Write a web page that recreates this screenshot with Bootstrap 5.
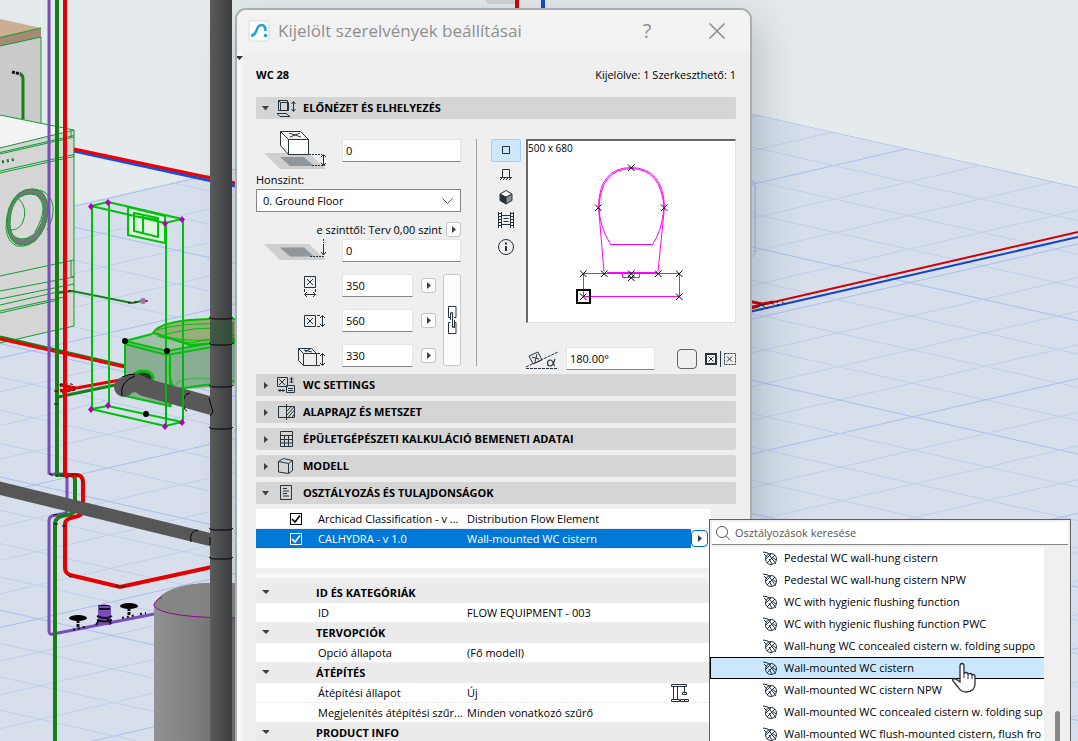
<!DOCTYPE html>
<html lang="hu">
<head>
<meta charset="utf-8">
<meta name="viewport" content="width=device-width, initial-scale=1">
<title>Kijelölt szerelvények beállításai</title>
<link href="https://cdn.jsdelivr.net/npm/bootstrap@5.3.0/dist/css/bootstrap.min.css" rel="stylesheet">
<style>
:root { --ink: #26333c; --panel: #efefef; --bar: #d5d5d5; --pick: #0078d7; }
body { font-family: "Open Sans", "Noto Sans", sans-serif; font-size: 11px; line-height: 16px; color: #000; background: #e5eaec; }
.desktop { position: relative; height: 100vh; overflow: hidden; }
.scene { position: absolute; inset: 0; width: 100%; height: 100%; }
.ico { display: block; flex: none; fill: none; stroke: var(--ink); }
/* settings window */
.dlg { position: absolute; left: 235px; top: 8px; width: 517px; bottom: -40px; border: 2px solid #a9afb1; border-radius: 11px; background: var(--panel); box-shadow: 6px 14px 44px rgba(40,60,80,.25); overflow: hidden; }
.dlg-title { height: 42px; background: #f2f2f2; padding: 0 11px 0 11px; color: #8f8f8f; }
.dlg-title h1 { font-size: 17px; line-height: 24px; font-weight: 400; }
.plain-btn { border: 0; background: none; padding: 0; color: inherit; }
.help { font-size: 20px; width: 32px; line-height: 24px; }
.shut { width: 44px; margin-left: 32px; justify-items: center; }
.dlg-body { position: relative; border-left: 5px solid #f7f7f7; padding: 0 14px; }
.dock-mark { position: absolute; left: -6px; top: 2px; width: 7px; height: 7px; fill: #333; }
.headline { height: 45px; }
.sect { display: flex; align-items: center; width: 100%; height: 22px; margin-bottom: 5px; padding: 0; border: 0; border-radius: 2px; background: var(--bar); font-size: 11px; font-weight: 700; text-align: left; color: #000; }
.sect .tri { margin-left: 5px; }
.sect .ico { margin: 0 7px; }
.tri { width: 9px; height: 9px; flex: none; fill: #404040; display: block; }
.placing { margin-top: -5px; height: 255px; padding-top: 12px; }
.left-part { width: 205px; }
.fld { height: 23px; border: 1px solid #e5e5e5; border-bottom: 1px solid #868686; background: #fff; padding: 0 3px; font-size: 11px; min-width: 0; color: #000; border-radius: 0; }
.fld-wide { width: 119px; }
.fld-dim { width: 71px; }
.fld-angle { width: 89px; }
.floor-pick { height: 23px; width: 100%; border: 1px solid #868686; background: #fff; appearance: none; padding: 0 6px; font-size: 11px; color: #000; border-radius: 0; }
.pop-btn { width: 15px; height: 15px; border: 1px solid #c4c4c4; border-radius: 3px; background: #fdfdfd; padding: 0; display: grid; place-items: center; flex: none; }
.chain { width: 18px; height: 92px; border: 1px solid #c8c8c8; border-radius: 3px; background: #fdfdfd; padding: 0; display: grid; place-items: center; }
.rule-v { width: 1px; height: 227px; background: #a0a0a0; margin: 8px 14px 0 15px; }
.view-btn { width: 30px; height: 23px; padding: 0; border: 1px solid transparent; background: none; border-radius: 2px; display: grid; place-items: center; }
.view-btn.on { background: #cce8ff; border-color: #99d1ff; }
.preview { width: 210px; height: 184px; border: 1px solid #e2e2e2; border-top: 2px solid #696969; border-left: 2px solid #696969; background: #fff; position: relative; }
.preview span { position: absolute; left: 0; top: -1px; font-size: 10px; }
.mirror { appearance: none; width: 20px; height: 20px; border: 1px solid #606060; border-radius: 4px; margin: 0 8px 0 22px; }
/* property tables */
.props { width: 455px; table-layout: fixed; border-collapse: separate; border-spacing: 0; margin: 0; }
.props td, .props th { height: 20px; padding: 0; line-height: 19px; border-bottom: 1px solid #efefef; background: #fff; white-space: nowrap; overflow: hidden; font-weight: 400; }
.props th { background: #ebebeb; font-weight: 700; border-color: #ebebeb; }
.props td:nth-child(2) { padding-left: 2px; }
.props tr.picked td { background: var(--pick); color: #fff; }
.props tr.picked td.edge { background: #fff; overflow: visible; }
.tick { appearance: none; width: 12px; height: 12px; border: 1px solid #000; background: #fff; display: block; margin: 0 auto; }
.tick:checked { background: #fff url("data:image/svg+xml,%3Csvg xmlns='http://www.w3.org/2000/svg' viewBox='0 0 10 10'%3E%3Cpath d='M1 5l3 3 5-6.500' fill='none' stroke='%23000' stroke-width='1.600'/%3E%3C/svg%3E"); }
.picked .tick:checked { border-color: #fff; background: var(--pick) url("data:image/svg+xml,%3Csvg xmlns='http://www.w3.org/2000/svg' viewBox='0 0 10 10'%3E%3Cpath d='M1 5l3 3 5-6.500' fill='none' stroke='%23fff' stroke-width='1.600'/%3E%3C/svg%3E"); }
.gap-strip { width: 455px; height: 5px; margin: 4px 0 5px; background: #f6f6f6; }
.picked .pop-btn { width: 17px; height: 17px; border-color: #0067c0; border-radius: 4px; }
/* classification menu */
.finder { position: absolute; left: 709px; top: 519px; width: 362px; bottom: -20px; border: 1px solid #606060; background: #f0f0f0; padding: 2px; }
.finder-search { height: 23px; background: #fff; border-bottom: 1px solid #868686; padding-left: 4px; }
.finder-search input { border: 0; padding: 0 0 0 4px; background: none; font-size: 11px; flex: 1; outline: 0; }
.finder-search input::placeholder { color: #555; opacity: 1; }
.finder-list { margin: 2px 24px 0 -2px; padding: 0; background: #fff; overflow: hidden; height: 240px; list-style: none; }
.finder-list a { display: flex; align-items: center; gap: 7px; height: 22px; padding-left: 52px; color: #000; text-decoration: none; white-space: nowrap; border: 1px solid transparent; border-right: 0; }
.finder-list a.on { background: #cce8ff; border-color: #000; }
.thumb { position: absolute; right: 10px; top: 191px; width: 5px; bottom: 0; border-radius: 3px; background: #868686; }
.hand { position: absolute; left: 951px; top: 662px; }
</style>
</head>
<body>
<main class="desktop">
<svg class="scene" viewBox="0 0 1078 741" preserveAspectRatio="xMinYMin slice" aria-hidden="true">
  <defs>
    <linearGradient id="stack"><stop offset="0" stop-color="#5c5c5c"/><stop offset=".4" stop-color="#505050"/><stop offset="1" stop-color="#3e3e3e"/></linearGradient>
    <linearGradient id="tank"><stop offset="0" stop-color="#929292"/><stop offset="1" stop-color="#686868"/></linearGradient>
    <clipPath id="ground"><path d="M0 222L611 82L1078 187V741H0z"/></clipPath>
  </defs>
  <path d="M0 222L611 82L1078 187V741H0z" fill="#d6dfeb"/>
  <g id="mesh" clip-path="url(#ground)" fill="none"></g>
  <path d="M486 0h29v2q0 2-4 2h-21q-4 0-4-4z" fill="#d0d4d6"/>
  <path d="M517 0V9" stroke="#d80000" stroke-width="4"/><path d="M543 0V9" stroke="#1347cf" stroke-width="4"/>
  <!-- right hand pipes -->
  <path d="M740 180q15-1 15 6v67l-4 5" fill="none" stroke="#9bb2e6"/>
  <path d="M740 309L765 304L1078 232" fill="none" stroke="#d40000" stroke-width="2"/>
  <path d="M740 314L780 305L1078 237" fill="none" stroke="#1145c8" stroke-width="2"/>
  <path d="M748 301l14 3 12-2M748 309l10-3" fill="none" stroke="#d40000" stroke-width="3"/>
  <path d="M758 303l10 6m-10-2l8-3m4-3l4 4m3-4l1 5m4-4l3 2" stroke="#111" stroke-dasharray="2 1"/>
  <!-- cabinet -->
  <path d="M0 46L41 36V123L0 115z" fill="#cbcbcb"/>
  <path d="M0 19L41 28L0 37.500z" fill="#ccae92"/><path d="M0 37.500L41 28V37L0 46z" fill="#a58a74"/>
  <path d="M0 37.500L41 28M0 46L41 37V123" fill="none" stroke="#109c30"/>
  <path d="M12 72l9 2" stroke="#111" stroke-width="3" stroke-dasharray="3 1"/><path d="M20 74q3 1 3 5v40" fill="none" stroke="#168016" stroke-width="3"/>
  <!-- washing machine -->
  <path d="M0 115L74 130V326L0 343z" fill="#d5d5d5"/>
  <path d="M0 115L74 130L0 148z" fill="#f3f3f3"/>
  <g fill="none" stroke="#109c30">
    <path d="M0 115L74 130V326L0 343M74 130L0 148M0 152.500L74 135.500M0 154L74 137M0 171L74 154.500M0 173L74 156.500M71 131v6M74 260L0 276M71 260v16l3 1M0 291L74 277M0 299L74 284M0 305L62 291M0 311L64 297M0 313L58 300"/>
    <path d="M33 189q12 0 14 15q2 20-8 32q-9 12-22 10q-10-4-11-18q0-23 12-34q7-5 15-5zM40 190q11 4 13 16q1 13-6 24"/>
    <path d="M2 162l14-3" stroke="#1d7a2c" stroke-width="3" stroke-dasharray="2 3"/>
  </g>
  <path d="M32 189Q47 190 48 208Q48 228 35 241Q27 246 20 245Q9 243 7 226Q7 205 18 194Q24 189 32 189z" fill="#777" stroke="#109c30"/>
  <path d="M30 194Q43 194 44 208Q44 225 33 235Q26 240 20 239Q10 237 10 224Q10 205 20 197Q25 194 30 194z" fill="#d9d9d9" stroke="#109c30"/>
  <path d="M19 199q10 10 3 25q-4 6-11 6M36 195q7 5 7 14t-8 23" fill="none" stroke="#109c30"/>
  <!-- supply pipes -->
  <path d="M74 151L235 186" stroke="#164fe0" stroke-width="3"/><path d="M74 149L235 183" stroke="#f00000" stroke-width="3"/>
  <path d="M0 337L125 366" stroke="#168016" stroke-width="3"/><path d="M0 339L125 367" stroke="#f00000" stroke-width="3"/>
  <path d="M58 293l14-2 60 12 10-2" fill="none" stroke="#168016" stroke-width="2"/><path d="M62 292l12-2M128 303l16-2" stroke="#111" stroke-dasharray="3 3"/>
  <circle cx="143" cy="301" r="3" fill="#987a9b"/><path d="M145 301h3" stroke="#c815cc" stroke-width="2"/>
  <path d="M58 397L120 384" stroke="#168016" stroke-width="3"/><path d="M60 391L120 380M60 385l16 3-14 4" stroke="#e50000" stroke-width="3" fill="none"/>
  <path d="M60 384h12l4 6-14 3z" fill="none" stroke="#111" stroke-dasharray="3 2"/>
  <path d="M49 0V473l4 2M53 474h14V510q0 4-6 4l-9 2q-3 1-3 5V631q0 4 4 3l101-20" fill="none" stroke="#7a4cc0" stroke-width="3"/>
  <path d="M57 0V475M56 475h14q5 0 5 5V508q0 6-8 7q-11 1-12 8V741" fill="none" stroke="#168016" stroke-width="4"/>
  <path d="M65 0V475h11q7 0 7 7V510q0 6-9 7q-9 2-9 7V568q0 5 5 7L120 587L212 567" fill="none" stroke="#e40000" stroke-width="4"/>
  <path d="M49 474l6 2 5-2 6 4 7-4 7 2 3 5M53 515l6-1M54 524h6M62 526h6M68 575l4 3M115 586l12 1M54 404h6M54 391h6" fill="none" stroke="#111" stroke-dasharray="4 2"/>
  <!-- water meter and valves -->
  <path d="M98 606h13v19h-13z" fill="#7a4cc0"/><path d="M99 609h11M97 616q8 4 15 0M97 620q8 3 15 0M96 625l3-5M107 618l4 6" fill="none" stroke="#111" stroke-width="2"/>
  <path d="M98 606q6-2 12 0" stroke="#111"/><ellipse cx="78" cy="618" rx="9" ry="3"/><ellipse cx="129" cy="606" rx="9" ry="3"/>
  <path d="M78 620v8M129 608v8" stroke="#111" stroke-width="3" stroke-dasharray="3 1"/><path d="M73 630l12-3M122 618l14-3M140 614l6-1" stroke="#111" stroke-width="2" stroke-dasharray="2 3"/>
  <!-- boiler -->
  <path d="M154 604Q165 584 210 583H240V741H154z" fill="url(#tank)"/>
  <path d="M154 604Q165 584 210 583H240V618Q160 619 154 604z" fill="#858585"/>
  <path d="M162 597Q153 602 154 606Q163 618 240 618" fill="none" stroke="#8c0a8c"/>
  <!-- WC and cistern -->
  <path d="M128 207L165 214V243L128 235z" fill="#dff5df"/>
  <path d="M125 341L160 331L240 322V386L172 390V407L125 396z" fill="#9dc0a6"/>
  <path d="M125 341L167 351L240 340V384L172 390V407L125 396z" fill="#7fa58a" fill-opacity=".65"/>
  <path d="M153 333Q160 320 210 319H240V341L190 345z" fill="#9aae7c" stroke="#00c000" stroke-width="2"/>
  <g fill="none" stroke="#00c00a" stroke-width="2">
    <path d="M91 206L108 202L182 219L165 223zM92 206V409M109 203V406M166 223V426M183 219V422M91 409L108 406L182 422L165 426zM128 207v28l37 8V216zM134 213l24 5v19l-24-6zM134 216l24 4M143 214v20"/>
    <path d="M125 341L152 334M125 341L167 351L240 338M125 344L167 355L240 342M125 341V396l45 10V354M170 360q-2 25 6 29l58-8"/>
    <path d="M157 330q25-8 75-6M157 337q35-12 75-8M157 333q25 12 75 4M160 337l30 6 45-8" stroke-width="1"/>
    <path d="M175 386q5-10 35-7q10 3 2 6" stroke="#4ebd52"/>
  </g>
  <ellipse cx="143" cy="378" rx="10" ry="7" fill="#263826" stroke="#00c00a" stroke-width="3"/>
  <path d="M127 387Q134 379 144 387L212 406" fill="none" stroke="#585858" stroke-width="18" stroke-linejoin="round"/><circle cx="124" cy="387" r="10" fill="#585858"/>
  <path d="M122 377q7-3 13-3M122 396q-3-14 13-20M190 393q-7 1-7 12 2 6 4 6" fill="none" stroke="#000"/>
  <path d="M166 352V426M183 345V422" stroke="#00b50a" stroke-width="2"/>
  <path d="M-5 487L212 540" stroke="#575757" stroke-width="13"/><path d="M198 530q-9 1-7 12" fill="none" stroke="#000"/>
  <path d="M210 0H232V741H210z" fill="url(#stack)"/>
  <path d="M210 322q11-5 24 0v22l-24 2z" fill="#315b38" fill-opacity=".55"/>
  <path d="M209 317q2 2 5 2h14q4 0 5-2M209 343q2 2 5 2h14q4 0 5-2M209 385q2 2 5 2h14q4 0 5-2M209 427q2 2 5 2h14q4 0 5-2M209 528q2 2 5 2h14q4 0 5-2M209 557q2 2 5 2h14q4 0 5-2M209 398l4 14-3 4M210 537v8" fill="none" stroke="#000"/>
  <g fill="#b300b8"><path id="dm" d="M91 203l3 3.500-3 3.500-3-3.500z"/><use href="#dm" x="17" y="-4"/><use href="#dm" x="91" y="13"/><use href="#dm" x="74" y="17"/><use href="#dm" y="203"/><use href="#dm" x="17" y="199"/><use href="#dm" x="91" y="216"/><use href="#dm" x="74" y="220"/></g>
  <g><circle cx="125" cy="341" r="3"/><circle cx="167" cy="351" r="3"/><circle cx="146" cy="414" r="3"/></g>
</svg>

<section class="dlg" aria-label="Kijelölt szerelvények beállításai">
  <header class="dlg-title d-flex align-items-center">
    <svg class="ico me-2" width="22" height="22" viewBox="0 0 22 22"><rect x="1" y="1" width="20" height="20" rx="3" fill="#fff" stroke="#dcdcdc"/><path d="M3 16Q7 15 8.500 10.500Q10 5 13.500 5Q17.500 5 17.500 11" stroke="#1ba6d2" stroke-width="2.500"/><circle cx="17.500" cy="15.500" r="1.800" fill="#1ba6d2" stroke="none"/></svg>
    <h1 class="m-0 flex-grow-1">Kijelölt szerelvények beállításai</h1>
    <button class="plain-btn help" aria-label="Súgó">?</button>
    <button class="plain-btn shut d-grid" aria-label="Bezárás"><svg class="ico" width="16" height="16" viewBox="0 0 16 16"><path d="M.5.5l15 15M15.500.5l-15 15" stroke="#8b8b8b" stroke-width="1.500"/></svg></button>
  </header>
  <div class="dlg-body">
    <svg class="dock-mark" viewBox="0 0 7 7"><path d="M0 2h7L3.500 6z"/></svg>
    <div class="headline d-flex justify-content-between align-items-center"><strong>WC 28</strong><span>Kijelölve: 1 Szerkeszthető: 1</span></div>

    <button class="sect"><svg class="tri" viewBox="0 0 9 9"><path d="M1 2h7L4.500 6.500z"/></svg><svg class="ico" width="19" height="18" viewBox="0 0 19 18"><path d="M1.500 1.500h9v10h-9zM1.500 1.500l2 2h8v8h-8v-8M0 14.500h9l4 3H3zM16.500 3v9M14.500 5l2-2.500 2 2.500M14.500 10l2 2.500 2-2.500"/></svg>ELŐNÉZET ÉS ELHELYEZÉS</button>

    <div class="placing d-flex align-items-start">
      <div class="left-part">
        <div class="d-flex">
          <svg class="ico" width="86" height="38" viewBox="0 0 86 38"><path d="M8 22h45l17 16H24z" fill="#cfcfcf" stroke="none"/><path d="M24 26h24l10 9H34z" fill="#8f979b" stroke="none"/><path d="M24.500.5h20l8 8v15h-20l-8-9zM24.500.5l8 8h20M32.500 8.500v15" fill="#fff"/><path d="M33 2l12 4M44 2L34 6"/><path d="M53 23.500h13M56 34.500h13" stroke-dasharray="2 1"/><path d="M67.500 24v10M65 26l2.500-2.500L70 26M65 32l2.500 2.500L70 32"/></svg>
          <input class="fld fld-wide mt-2" value="0" aria-label="Magasság a honszinttől">
        </div>
        <label for="floor" class="d-block pt-1 pb-0" style="height:20px;line-height:14px">Honszint:</label>
        <div class="position-relative"><select id="floor" class="floor-pick"><option>0. Ground Floor</option></select><svg class="ico position-absolute end-0 top-50 translate-middle-y me-2" width="11" height="8" viewBox="0 0 11 8"><path d="M.5 1.500l5 5 5-5" stroke="#555"/></svg></div>
        <div class="d-flex align-items-center justify-content-end gap-1 mt-1 pt-1" style="height:23px"><span>e szinttől: Terv 0,00 szint</span><button class="pop-btn" aria-label="Szint választása"><svg class="tri" viewBox="0 0 9 9"><path d="M3 1l4 3.500L3 8z"/></svg></button></div>
        <div class="d-flex">
          <svg class="ico" width="86" height="23" viewBox="0 0 86 23"><path d="M8 5h45l17 16H24z" fill="#cfcfcf" stroke="none"/><path d="M24 8.500h24l10 9H34z" fill="#8f979b" stroke="none"/><path d="M54 17.500h14M67.500 0v4" stroke-dasharray="2 1"/><path d="M67.500 5v11M65 13l2.500 3 2.500-3"/></svg>
          <input class="fld fld-wide" value="0" aria-label="Magasság">
        </div>
        <div class="d-flex justify-content-between pt-2">
          <div class="d-flex flex-column gap-2 pt-1">
            <div class="d-flex align-items-center pb-1"><svg class="ico" width="86" height="23" viewBox="0 0 86 23"><path d="M48.500 2.500h11v11h-11zM51 5l6 6M57 5l-6 6M49 20.500h11M51 18l-2.500 2.500L51 23M57 18l2.500 2.500L57 23M48.500 15v3M59.500 15v3"/></svg><input class="fld fld-dim me-2" value="350" aria-label="Szélesség"><button class="pop-btn" aria-label="Szélesség lehetőségek"><svg class="tri" viewBox="0 0 9 9"><path d="M3 1l4 3.500L3 8z"/></svg></button></div>
            <div class="d-flex align-items-center pb-1"><svg class="ico" width="86" height="23" viewBox="0 0 86 23"><path d="M48.500 6.500h11v11h-11zM51 9l6 6M57 9l-6 6M66.500 7v10M64 9l2.500-2.500L69 9M64 15l2.500 2.500L69 15M61 6.500h3M61 17.500h3"/></svg><input class="fld fld-dim me-2" value="560" aria-label="Mélység"><button class="pop-btn" aria-label="Mélység lehetőségek"><svg class="tri" viewBox="0 0 9 9"><path d="M3 1l4 3.500L3 8z"/></svg></button></div>
            <div class="d-flex align-items-center"><svg class="ico" width="86" height="23" viewBox="0 0 86 23"><path d="M42.500 4.500h13l5 5v12h-13l-5-5zM42.500 4.500l5 5h13M47.500 9.500v12M48 6l8 2M54 5l-5 3M66.500 10v11M64 12l2.500-2.500L69 12M64 19l2.500 2.500L69 19M61 9.500h3M61 21.500h3"/></svg><input class="fld fld-dim me-2" value="330" aria-label="Magasság méret"><button class="pop-btn" aria-label="Magasság lehetőségek"><svg class="tri" viewBox="0 0 9 9"><path d="M3 1l4 3.500L3 8z"/></svg></button></div>
          </div>
          <button class="chain mt-1" aria-label="Arányos méretezés"><svg class="ico" width="9" height="28" viewBox="0 0 9 28"><path d="M2.500 11.500H.5V.5h7.500v11H6M2.500 16.500H.5v11h7.500v-11H6M4.500 12v4M2.500 9V8.500q0-2 2-2V12M6.500 19v.5q0 2-2 2V16M2.500 6.500V14M6.500 14v8"/></svg></button>
        </div>
      </div>
      <div class="rule-v"></div>
      <div class="d-flex flex-column pt-2 flex-grow-1">
        <div class="d-flex justify-content-between">
          <div class="d-flex flex-column">
            <button class="view-btn on" aria-label="Alaprajz"><svg class="ico" width="16" height="16" viewBox="0 0 16 16"><path d="M4.500 3.500h7v7h-7z"/></svg></button>
            <button class="view-btn" aria-label="Nézet"><svg class="ico" width="16" height="16" viewBox="0 0 16 16"><path d="M4.500 11V3.500h7V11M2 11.500h12M4 12l-2 2M7 12l-2 2M10 12l-2 2M13 12l-2 2"/></svg></button>
            <button class="view-btn" aria-label="3D nézet"><svg class="ico" width="16" height="16" viewBox="0 0 16 16"><path d="M2 5l6 3v7l-6-3.500z" fill="#26333c"/><path d="M8 8l6-3v6.500L8 15z" fill="#8a9196"/><path d="M2 5l6-3.500L14 5 8 8z" fill="#fff"/></svg></button>
            <button class="view-btn" aria-label="Előnézeti kép"><svg class="ico" width="16" height="16" viewBox="0 0 16 16"><path d="M.5 0v16M3.500 0v16M12.500 0v16M15.500 0v16M4 3.500h8M4 12.500h8M5.500 6.500h5M5.500 9.500h5"/><path d="M2 1v15M14 1v15" stroke-width="2" stroke-dasharray="1 2"/></svg></button>
            <button class="view-btn mt-1" aria-label="Információ"><svg class="ico" width="16" height="16" viewBox="0 0 16 16"><circle cx="8" cy="8" r="7.500"/><path d="M8 7v5M8 3.500v2" stroke-width="2"/></svg></button>
          </div>
          <div class="preview"><span>500 x 680</span>
            <svg class="ico" width="206" height="181" viewBox="0 0 206 181" stroke-width="1"><g stroke="#f0f"><path d="M76 130.500L70.500 66Q71 27 103 26.500Q135 27 136.500 66L130 130.500"/><path d="M71 66Q73 28 103 27.500Q133 28 136 66Q134 90 124.500 103.500H82.500Q71 84 71 66z"/><path d="M55.500 132.500h96v23h-96zM79 131.500h50M94.500 132.500v4h17v-4"/></g><path d="M49 149h13v13h-13z" stroke="#000" stroke-width="2"/><g stroke="#000"><path id="xm" d="M100 23.500l6.500 6.500M106.500 23.500L100 30"/><use href="#xm" x="-33" y="40"/><use href="#xm" x="33" y="40"/><use href="#xm" x="-48" y="106"/><use href="#xm" x="-27" y="106"/><use href="#xm" y="106"/><use href="#xm" y="110"/><use href="#xm" x="27" y="106"/><use href="#xm" x="48" y="106"/><use href="#xm" x="-48" y="129"/><use href="#xm" x="48" y="129"/></g></svg>
          </div>
        </div>
        <div class="d-flex align-items-center justify-content-end mt-3 pt-2">
          <svg class="ico me-2" width="32" height="22" viewBox="0 0 32 22"><path d="M0 20.500h32M0 19L32 4" stroke-dasharray="3 1"/><path d="M3 8l9-4 4 8-9 4zM6 9l7 2M11 6l-2 8"/><path d="M29 11q-2 7-5 7-2.500 0-2.500-3t3-3q2 0 4 6" stroke-width="1.200"/></svg>
          <input class="fld fld-angle" value="180.00°" aria-label="Forgatási szög">
          <input type="checkbox" class="mirror" aria-label="Tükrözés">
          <svg class="ico" width="31" height="16" viewBox="0 0 31 16"><path d="M1 3h10v10H1z" stroke-width="2"/><path d="M3.500 5.500l5 5M8.500 5.500l-5 5M15.500 0v16M22 5.500l5 5M27 5.500l-5 5"/><path d="M19.500 2.500h11v11h-11z" stroke-dasharray="2 1"/></svg>
        </div>
      </div>
    </div>

    <button class="sect"><svg class="tri" viewBox="0 0 9 9"><path d="M3 1l4 3.500L3 8z"/></svg><svg class="ico" width="19" height="18" viewBox="0 0 19 18"><path d="M.5 1.500h10v9H.5zM2 3l6 6M8 3L2 9M14.500 1v6M12.500 3h4M12.500 6h4M1 14.500h7M3 13v3M6 13v3M9.500 9.500h8v7h-8zM11 12.500h5M11 14.500h5"/></svg>WC SETTINGS</button>
    <button class="sect"><svg class="tri" viewBox="0 0 9 9"><path d="M3 1l4 3.500L3 8z"/></svg><svg class="ico" width="19" height="18" viewBox="0 0 19 18"><path d="M1.500 3.500h8v11h-8zM9.500 1v16M9.500 3.500h8v11h-8zM10 8l5-5M10 12l7-8M10.500 15l7-8M14.500 15l3-4"/></svg>ALAPRAJZ ÉS METSZET</button>
    <button class="sect"><svg class="tri" viewBox="0 0 9 9"><path d="M3 1l4 3.500L3 8z"/></svg><svg class="ico" width="19" height="18" viewBox="0 0 19 18"><path d="M3.500 1.500h12v15h-12zM3.500 5.500h12M3.500 9.500h12M3.500 13h12M7.500 5.500v11M11.500 5.500v11"/></svg>ÉPÜLETGÉPÉSZETI KALKULÁCIÓ BEMENETI ADATAI</button>
    <button class="sect"><svg class="tri" viewBox="0 0 9 9"><path d="M3 1l4 3.500L3 8z"/></svg><svg class="ico" width="19" height="18" viewBox="0 0 19 18"><path d="M1.500 4.500l5-3 9 2-4 3zM11.500 6.500v10l-10-1.500V4.500M11.500 16.500l4-3v-10"/></svg>MODELL</button>
    <button class="sect"><svg class="tri" viewBox="0 0 9 9"><path d="M1 2h7L4.500 6.500z"/></svg><svg class="ico" width="19" height="18" viewBox="0 0 19 18"><path d="M3.500 1.500h11v14h-11zM6 4.500h4M6 7h6M6 9.500h4M6 12h6"/></svg>OSZTÁLYOZÁS ÉS TULAJDONSÁGOK</button>

    <table class="props">
      <colgroup><col style="width:60px"><col style="width:151px"><col><col style="width:20px"></colgroup>
      <tr><td><input type="checkbox" class="tick" style="margin-left:34px" checked aria-label="Archicad Classification"></td><td>Archicad Classification - v ...</td><td>Distribution Flow Element</td><td></td></tr>
      <tr class="picked"><td><input type="checkbox" class="tick" style="margin-left:34px" checked aria-label="CALHYDRA"></td><td>CALHYDRA - v 1.0</td><td>Wall-mounted WC cistern</td><td class="edge"><button class="pop-btn" aria-label="Osztályozás választása"><svg class="tri" viewBox="0 0 9 9"><path d="M3 1l4 3.500L3 8z"/></svg></button></td></tr>
      <tr><td></td><td></td><td></td><td></td></tr>
    </table>
    <div class="gap-strip"></div>
    <table class="props">
      <colgroup><col style="width:60px"><col style="width:151px"><col><col style="width:40px"></colgroup>
      <tr><th><svg class="tri ms-1" viewBox="0 0 9 9"><path d="M2 2h8L6 6z"/></svg></th><th colspan="3">ID ÉS KATEGÓRIÁK</th></tr>
      <tr><td></td><td>ID</td><td>FLOW EQUIPMENT - 003</td><td></td></tr>
      <tr><th><svg class="tri ms-1" viewBox="0 0 9 9"><path d="M2 2h8L6 6z"/></svg></th><th colspan="3">TERVOPCIÓK</th></tr>
      <tr><td></td><td>Opció állapota</td><td>(Fő modell)</td><td></td></tr>
      <tr><th><svg class="tri ms-1" viewBox="0 0 9 9"><path d="M2 2h8L6 6z"/></svg></th><th colspan="3">ÁTÉPÍTÉS</th></tr>
      <tr><td></td><td>Átépítési állapot</td><td>Új</td><td><svg class="ico" width="18" height="18" viewBox="0 0 18 18"><path d="M.5.5h15v2H.5zM2.500 2.500v13M6.500 2.500v13M.5 15.500h8v2h-8zM13.500 2.500v6M11.500 8.500h4v2h-4zM9.500 15.500h8v2h-8zM13.500 15v2"/></svg></td></tr>
      <tr><td></td><td>Megjelenítés átépítési szűr...</td><td>Minden vonatkozó szűrő</td><td></td></tr>
      <tr><th><svg class="tri ms-1" viewBox="0 0 9 9"><path d="M2 2h8L6 6z"/></svg></th><th colspan="3">PRODUCT INFO</th></tr>
    </table>
  </div>
</section>

<section class="finder" aria-label="Osztályozások">
  <div class="finder-search d-flex align-items-center"><svg class="ico" width="15" height="15" viewBox="0 0 15 15"><circle cx="6" cy="6" r="5.500" stroke="#555"/><path d="M10 10l4 4" stroke="#555"/></svg><input type="text" placeholder="Osztályozások keresése" aria-label="Osztályozások keresése"></div>
  <ul class="finder-list">
    <li><a href="#">Pedestal WC wall-hung cistern</a></li>
    <li><a href="#">Pedestal WC wall-hung cistern NPW</a></li>
    <li><a href="#">WC with hygienic flushing function</a></li>
    <li><a href="#">WC with hygienic flushing function PWC</a></li>
    <li><a href="#">Wall-hung WC concealed cistern w. folding suppo</a></li>
    <li><a href="#" class="on">Wall-mounted WC cistern</a></li>
    <li><a href="#">Wall-mounted WC cistern NPW</a></li>
    <li><a href="#">Wall-mounted WC concealed cistern w. folding sup</a></li>
    <li><a href="#">Wall-mounted WC flush-mounted cistern, flush fro</a></li>
  </ul>
  <div class="thumb"></div>
</section>
<svg class="hand" width="27" height="34" viewBox="0 0 27 34" aria-hidden="true"><path d="M9 20V4q0-2.500 2-2.500t2 2.500v8q0-1.500 2-1.500t2 2q0-1 2-1t2 2q0-1 1.500-1t1.500 2v7q0 8.500-9 8.500-5 0-8-5L2 19q-1-2 1-2.500 2 0 4 2z" fill="#fff" stroke="#2b2b3c" stroke-width="1.300"/><path d="M13 12v4M17 12v5M21 13v4" stroke="#2b2b3c"/></svg>
</main>
<script src="https://cdn.jsdelivr.net/npm/bootstrap@5.3.0/dist/js/bootstrap.bundle.min.js"></script>
<script>
// ground mesh: two families of sloping lines, every fourth one stronger
const mesh = document.getElementById('mesh');
let lines = '';
for (let k = -13; k <= 18; k++) {
  const x = 913 + 0.8 * k, y = 416.7 + 33.5 * k;
  const color = k % 4 === 0 ? '#aabff0' : '#c0cfed';
  for (const s of [0.226, -0.231])
    lines += `<path d="M0 ${y - s * x}L1078 ${y + s * (1078 - x)}" stroke="${color}"/>`;
}
mesh.innerHTML = lines;
// the same classification symbol stands before every entry
const symbol = '<svg class="ico" width="14" height="14" viewBox="0 0 14 14"><circle cx="8" cy="8" r="5.500"/><path d="M0 1l5 1 8 11M1 3l3 3M4 12L12 4M8 3L3 8M6 8l3 5M9 6l4 3"/></svg>';
document.querySelectorAll('.finder-list a').forEach(a => a.insertAdjacentHTML('afterbegin', symbol));
</script>
</body>
</html>
